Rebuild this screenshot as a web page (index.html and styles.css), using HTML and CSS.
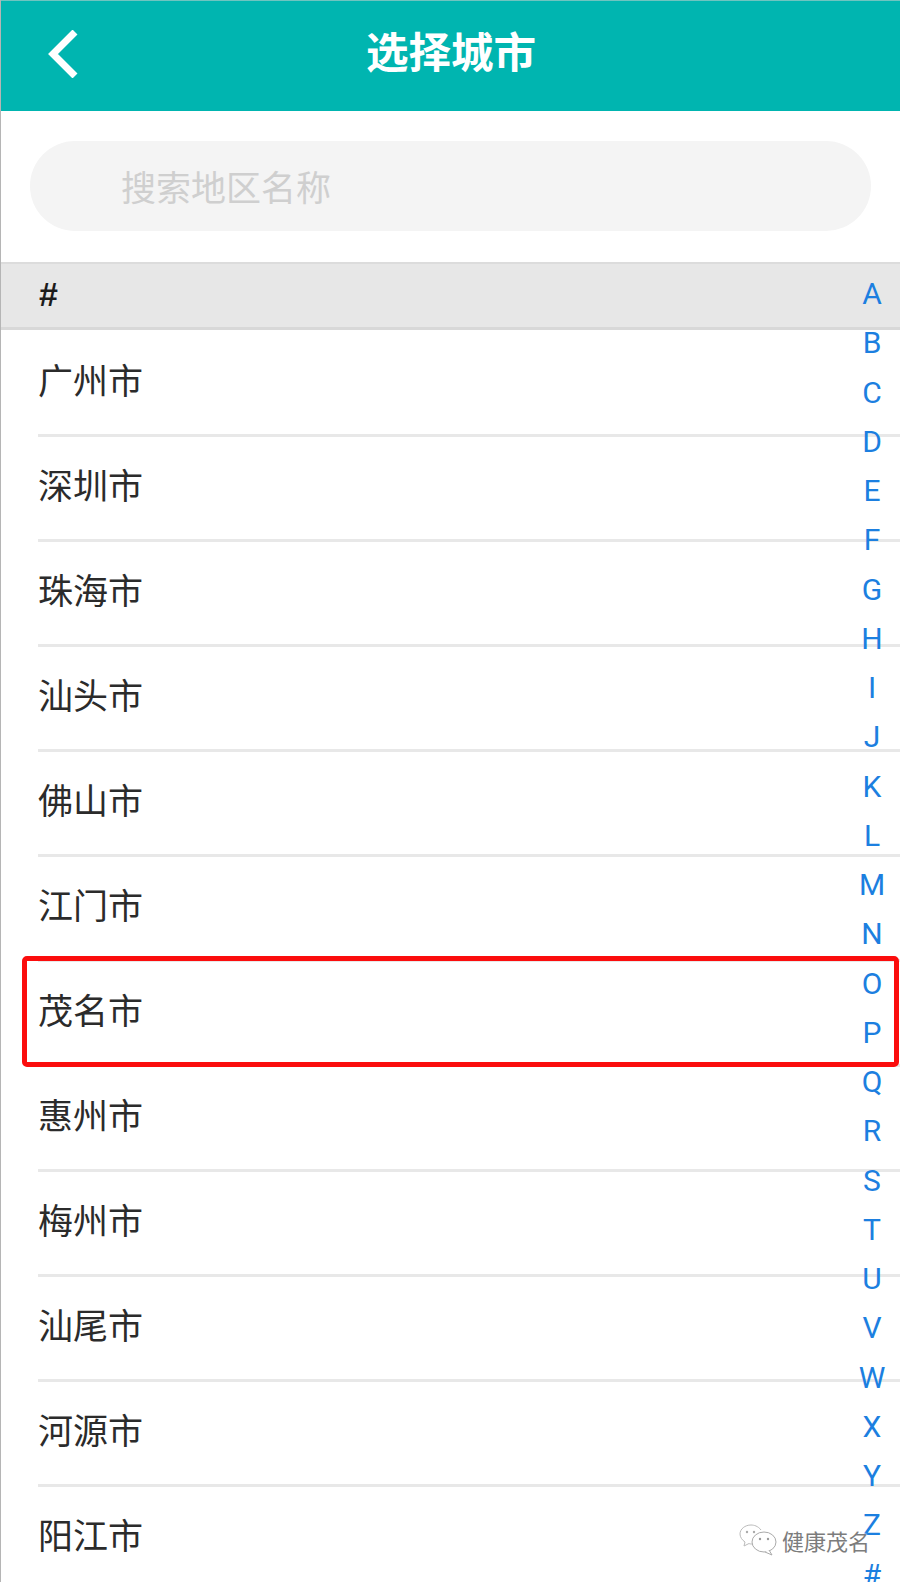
FILE: index.html
```html
<!DOCTYPE html>
<html lang="zh-CN">
<head>
  <meta charset="UTF-8" />
  <meta name="viewport" content="width=device-width, initial-scale=1.0"/>
  <title>选择城市</title>
  <link rel="stylesheet" href="styles.css">
</head>
<body>
  <div class="page">

    <!-- Header -->
    <div class="top-bar">
      <svg class="back-icon" width="32" height="48" viewBox="0 0 32 48">
        <path d="M28 4 L6 26 L28 48" transform="translate(0 -2)" fill="none" stroke="#fff" stroke-width="7"/>
      </svg>
      <h1>选择城市</h1>
    </div>

    <!-- Search -->
    <div class="search-wrap">
      <div class="search-box">搜索地区名称</div>
    </div>

    <!-- City list -->
    <div class="section-title">#</div>
    <ul class="city-list">
      <li>广州市</li>
      <li>深圳市</li>
      <li>珠海市</li>
      <li>汕头市</li>
      <li>佛山市</li>
      <li>江门市</li>
      <li>茂名市</li>
      <li>惠州市</li>
      <li>梅州市</li>
      <li>汕尾市</li>
      <li>河源市</li>
      <li>阳江市</li>
    </ul>

    <!-- Red mark around the highlighted city -->
    <div class="highlight"></div>

    <!-- Letter index -->
    <div class="alpha-index">
      <span>A</span><span>B</span><span>C</span><span>D</span><span>E</span><span>F</span><span>G</span>
      <span>H</span><span>I</span><span>J</span><span>K</span><span>L</span><span>M</span><span>N</span>
      <span>O</span><span>P</span><span>Q</span><span>R</span><span>S</span><span>T</span><span>U</span>
      <span>V</span><span>W</span><span>X</span><span>Y</span><span>Z</span><span>#</span>
    </div>

    <!-- Watermark -->
    <div class="watermark">
      <svg width="38" height="32" viewBox="0 0 38 32">
        <path d="M22 6 C19 2 15 1 12 1 C6 1 1 5 1 10 C1 13 3 16 6 18 L5 22 L10 19.5 C11 20 12 20 14 20" fill="#fff" stroke="#bbb" stroke-width="1"/>
        <ellipse cx="25" cy="18" rx="12" ry="10" fill="#fff" stroke="#aaa" stroke-width="1"/>
        <path d="M30 26 L33 31 L26 28" fill="#fff" stroke="#aaa" stroke-width="1"/>
        <circle cx="8" cy="8" r="1.2" fill="#aaa"/>
        <circle cx="15" cy="8" r="1.2" fill="#aaa"/>
        <circle cx="21" cy="15" r="1.2" fill="#999"/>
        <circle cx="29" cy="15" r="1.2" fill="#999"/>
      </svg>
      <span>健康茂名</span>
    </div>
  </div>
</body>
</html>
```

FILE: styles.css
```css
* { box-sizing: border-box; margin: 0; padding: 0; }

html, body {
  height: 100%;
  overflow: hidden;
  background: #fff;
  font-family: "Noto Sans CJK SC", "Noto Sans", sans-serif;
}

.page {
  position: relative;
  width: 900px;
  height: 1582px;
  overflow: hidden;
  border-left: 1px solid #b5b5b5;
}

/* Header */
.top-bar {
  position: relative;
  height: 111px;
  margin-left: -1px;
  padding-bottom: 12px;
  padding-left: 2px;
  border-top: 1px solid #6fc4c0;
  background: #00b5b0;
  display: flex;
  align-items: center;
  justify-content: center;
}

.top-bar h1 {
  color: #fff;
  font-size: 42.5px;
  font-weight: 700;
  line-height: 1;
}

.back-icon {
  position: absolute;
  left: 47px;
  top: 29px;
}

/* Search */
.search-wrap {
  padding: 30px 29px 31px;
}

.search-box {
  width: 841px;
  height: 90px;
  padding-left: 91px;
  border-radius: 45px;
  background: #f4f4f4;
  color: #cfcfcf;
  font-size: 35px;
  line-height: 90px;
}

/* List */
.section-title {
  height: 68px;
  padding-left: 38px;
  border-top: 2px solid #dcdcdc;
  border-bottom: 3px solid #d8d8d8;
  background: #e7e7e7;
  color: #1c1c1c;
  font-family: "Liberation Sans", sans-serif;
  font-size: 34px;
  font-weight: 700;
  line-height: 60px;
}

.city-list {
  list-style: none;
  padding-top: 2px;
  padding-left: 37px;
}

.city-list li {
  height: 105px;
  border-bottom: 3px solid #e8e8e8;
  color: #2b2b2b;
  font-size: 35px;
  line-height: 94px;
}

.highlight {
  position: absolute;
  left: 21px;
  top: 956px;
  width: 877px;
  height: 111px;
  border: 5px solid #fb0d0d;
  border-radius: 5px;
}

/* Letter index */
.alpha-index {
  position: absolute;
  top: 269px;
  left: 844px;
  width: 54px;
  display: flex;
  flex-direction: column;
  align-items: center;
  color: #1c7fe0;
  font-family: Roboto, sans-serif;
  font-size: 30px;
}

.alpha-index span {
  flex: none;
  height: 49.25px;
  line-height: 49px;
}

/* Watermark */
.watermark {
  position: absolute;
  left: 738px;
  top: 1524px;
  display: flex;
  align-items: center;
  gap: 5px;
  color: #7c7c7c;
  font-size: 22px;
  line-height: 32px;
  text-shadow: 0 0 2px #fff, 0 0 2px #fff;
}
```
